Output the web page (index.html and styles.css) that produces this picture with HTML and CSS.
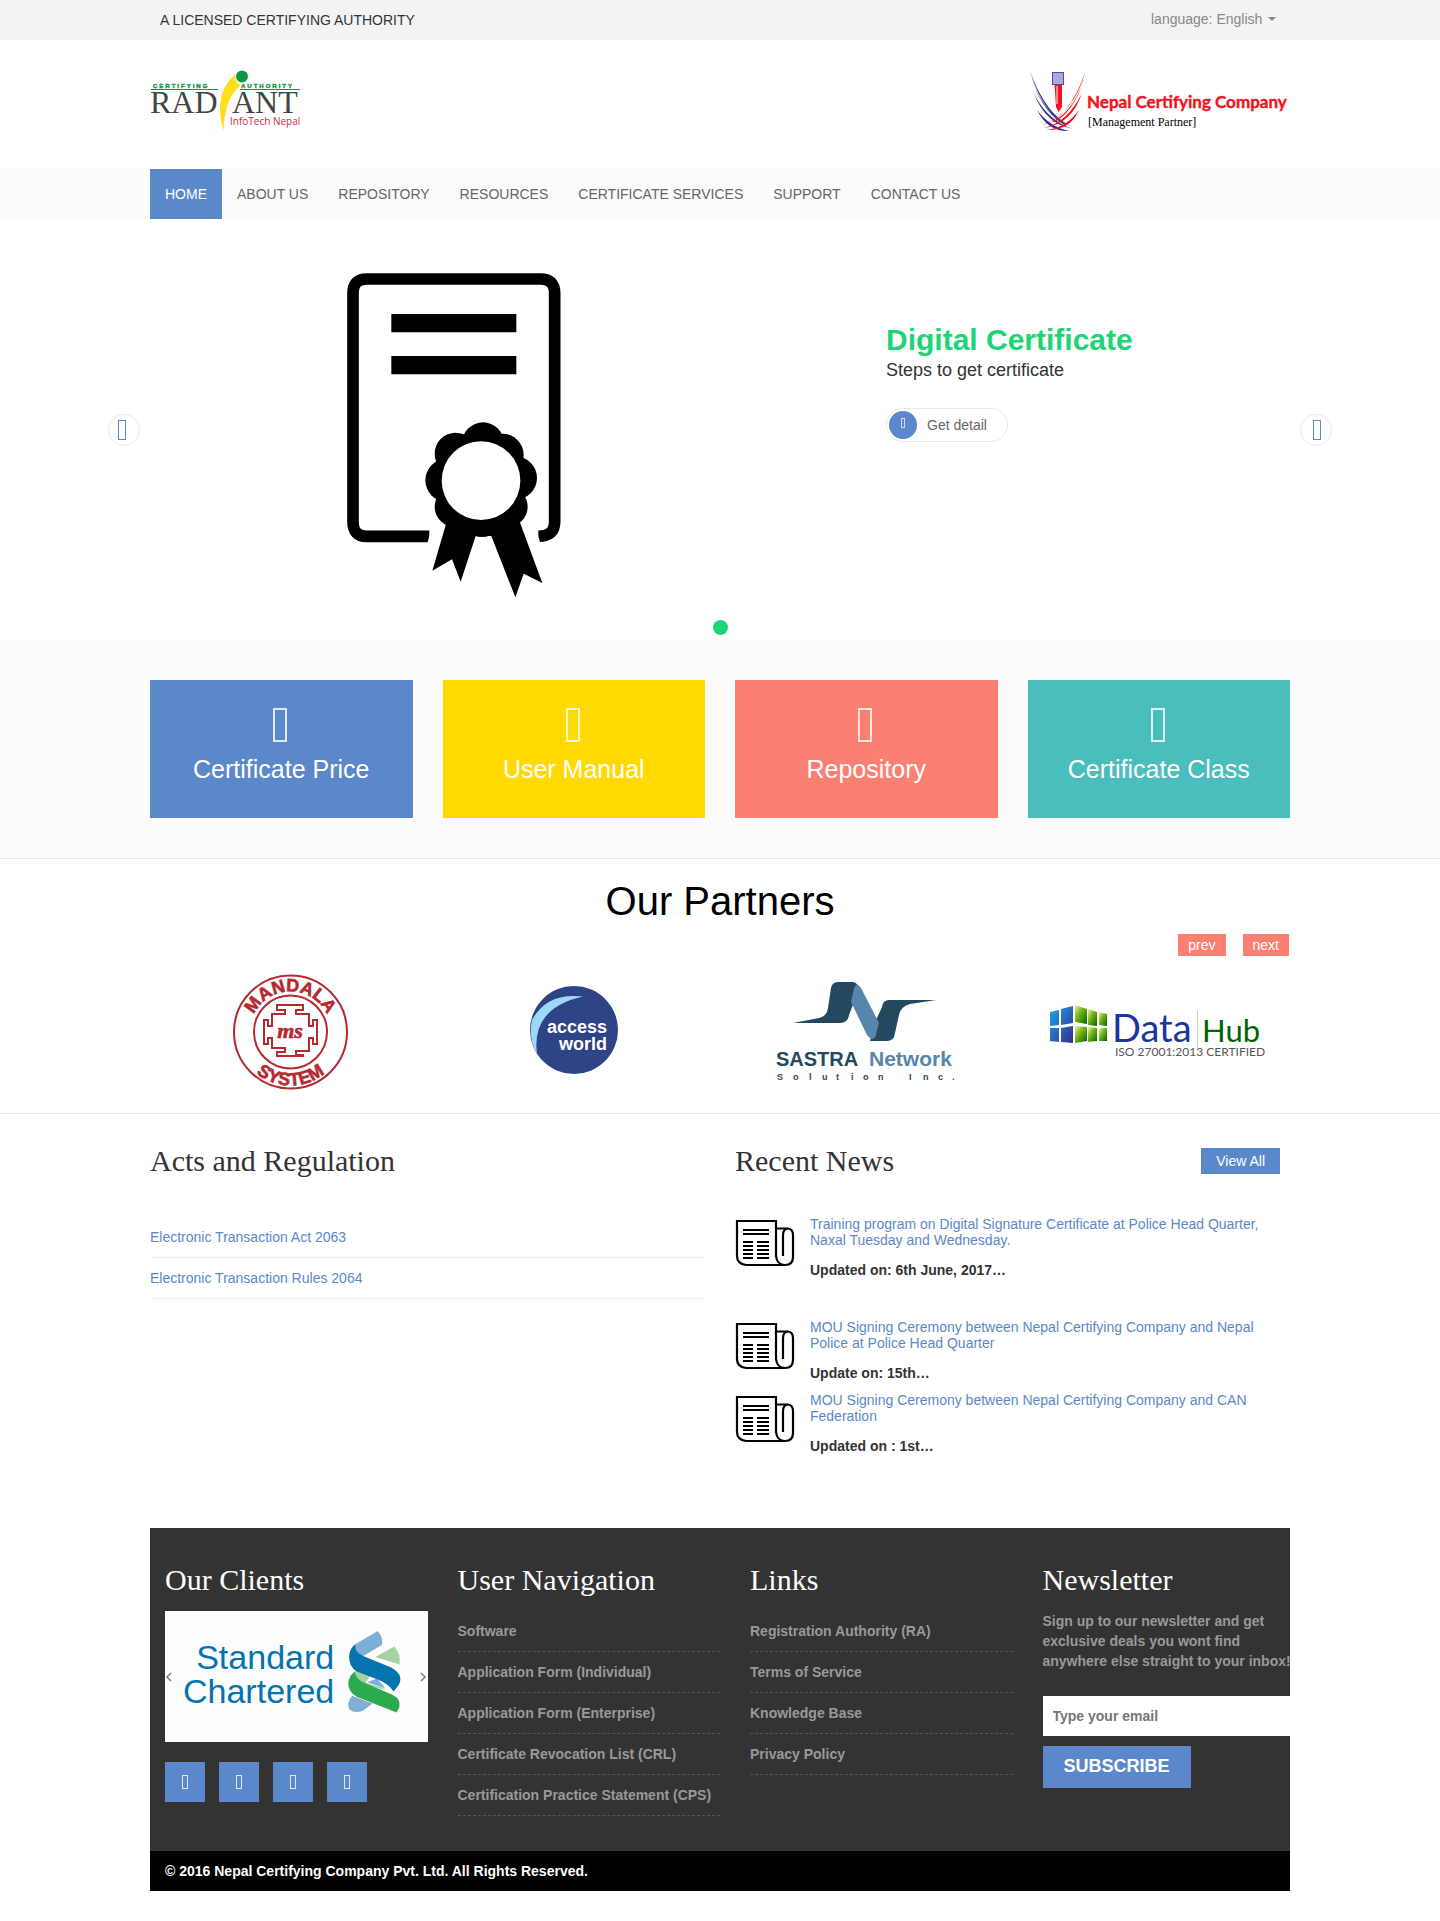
FILE: index.html
```html
<!DOCTYPE html>
<html lang="en">
<head>
<meta charset="utf-8">
<meta name="viewport" content="width=device-width, initial-scale=1">
<title>Radiant InfoTech Nepal</title>
<link rel="stylesheet" href="styles.css">
</head>
<body>
<div class="topbar">
  <div class="container topbar-row">
    <span>A LICENSED CERTIFYING AUTHORITY</span>
    <label class="language">
      <select aria-label="Language"><option>language: English</option></select>
      <span class="caret"></span>
    </label>
  </div>
</div>

<header class="container brand">
  <a href="#" aria-label="Radiant InfoTech Nepal">
    <svg width="151" height="64" viewBox="0 0 151 64">
      <g class="radiant-tag"><text x="3" y="18">CERTIFYING</text><text x="91" y="18">AUTHORITY</text></g>
      <path d="M1 19.500H68M90 19.500H150" stroke="#0f9747"/>
      <g class="radiant-name"><text x="0" y="43">RAD</text><text x="82" y="43">ANT</text></g>
      <path d="M85.500 4Q71.500 16 70 34Q69.500 48 73.500 61Q74 30 90.500 15Q84 12 85.500 4Z" fill="#ffdf1a"/>
      <circle cx="92" cy="6.500" r="6" fill="#0f9747"/>
      <text class="radiant-sub" x="80" y="55">InfoTech Nepal</text>
    </svg>
  </a>
  <a href="#" aria-label="Nepal Certifying Company">
    <svg width="260" height="64" viewBox="0 0 260 64">
      <g fill="#2a2f96">
        <path d="M0 1Q14 48 43 57Q16 46 0 1Z"/>
        <path d="M0 1Q10 40 36 54L33 54Q10 40 0 1Z"/>
        <path d="M4 24Q16 54 43 59Q18 51 4 24Z"/>
        <path d="M7 40Q18 62 39 61Q20 57 7 40Z"/>
      </g>
      <g fill="#f0141e">
        <path d="M55.500 1Q44 44 12 55Q40 48 55.500 1Z"/>
        <path d="M55.500 1Q48 38 22 52L25 52Q48 38 55.500 1Z"/>
        <path d="M52 23Q42 54 14 58Q38 52 52 23Z"/>
        <path d="M49 40Q40 61 16 60Q36 58 49 40Z"/>
        <path d="M24.500 14H32V37L28.500 42L26 37Z"/>
      </g>
      <path d="M27 16V34" stroke="#fff"/>
      <rect x="22.500" y="2.500" width="11" height="12" fill="#a9a9dc" stroke="#4a4ab0"/>
      <text class="ncc-name" x="57" y="38">Nepal Certifying Company</text>
      <text class="ncc-sub" x="58" y="56">[Management Partner]</text>
    </svg>
  </a>
</header>

<nav class="mainnav">
  <div class="container mainnav-row">
    <a class="active" href="#">HOME</a>
    <a href="#">ABOUT US</a>
    <a href="#">REPOSITORY</a>
    <a href="#">RESOURCES</a>
    <a href="#">CERTIFICATE SERVICES</a>
    <a href="#">SUPPORT</a>
    <a href="#">CONTACT US</a>
  </div>
</nav>

<section class="hero">
  <div class="container slide">
    <div class="slide-art">
      <svg width="216" height="326" viewBox="75 66 648 978">
        <path d="M328 859H140Q99 859 99 815V130Q99 87 140 87H662Q704 87 704 130V815Q704 859 655 859" fill="none" stroke="#000" stroke-width="35"/>
        <path d="M334 838L322 880H345V838ZM648 838L661 880H640V838Z" fill="#fff"/>
        <path d="M214 192H589V247H214ZM214 318H589V373H214Z"/>
        <path d="M380 815L337 962L396 928L422 995L467 858H514L586 1042L611 971L667 999L598 812Z"/>
        <circle cx="489" cy="580" r="63"/><circle cx="407" cy="611" r="63"/><circle cx="547" cy="615" r="64"/>
        <circle cx="381" cy="691" r="65"/><circle cx="586" cy="684" r="65"/><circle cx="405" cy="770" r="61"/>
        <circle cx="562" cy="770" r="61"/><circle cx="486" cy="800" r="61"/>
        <circle cx="483" cy="692" r="118" fill="#fff"/>
      </svg>
    </div>
    <div class="slide-copy">
      <h1>Digital Certificate</h1>
      <p>Steps to get certificate</p>
      <a class="detail" href="#"><span class="detail-dot"><i class="glyph glyph-xs"></i></span>Get detail</a>
    </div>
    <button class="arrow arrow-prev" aria-label="Previous slide"><i class="glyph glyph-md"></i></button>
    <button class="arrow arrow-next" aria-label="Next slide"><i class="glyph glyph-md"></i></button>
  </div>
  <button class="pager" aria-label="Slide 1"></button>
</section>

<section class="features">
  <div class="container tiles">
    <a class="tile blue" href="#"><i class="glyph glyph-lg"></i>Certificate Price</a>
    <a class="tile yellow" href="#"><i class="glyph glyph-lg"></i>User Manual</a>
    <a class="tile coral" href="#"><i class="glyph glyph-lg"></i>Repository</a>
    <a class="tile teal" href="#"><i class="glyph glyph-lg"></i>Certificate Class</a>
  </div>
</section>

<section class="partners">
  <div class="container">
    <h2>Our Partners</h2>
    <div class="partner-controls"><button>prev</button><button>next</button></div>
    <div class="partner-logos">
      <svg viewBox="0 0 285 140">
        <g fill="none" stroke="#b5292f">
          <circle cx="140.500" cy="72" r="56.500" stroke-width="2"/>
          <circle cx="140.500" cy="72" r="36.500" stroke-width="2"/>
          <path stroke-width="2" d="M127 45H153V50H146V54H159V66H163V60H167V84H163V78H159V91H146V95H153V96H127V92H135V88H122V78H118V84H114V60H118V66H122V54H135V50H127Z"/>
          <path id="arc-top" d="M100 72A40.500 40.500 0 0 1 181 72" stroke="none"/>
          <path id="arc-bottom" d="M87 72A53.500 53.500 0 0 0 194 72" stroke="none"/>
        </g>
        <g class="mandala-text">
          <text><textPath href="#arc-top" startOffset="50%">MANDALA</textPath></text>
          <text><textPath href="#arc-bottom" startOffset="50%">SYSTEM</textPath></text>
          <text class="mandala-mono" x="140" y="78">ms</text>
        </g>
      </svg>
      <svg viewBox="0 0 285 140">
        <circle cx="139" cy="70" r="44" fill="#2e4487"/>
        <path d="M148 36.500Q112 32 97 60Q93 78 102 94Q96 48 148 36.500Z" fill="#9ad9f7"/>
        <g class="access-text"><text x="172" y="73">access</text><text x="172" y="90">world</text></g>
      </svg>
      <svg viewBox="0 0 285 140">
        <path d="M73 63L99 58Q107 56 108 48L111 28Q112 22 118 22H133Q138 23 139 29L129 55Q128 63 120 63Z" fill="#24485e"/>
        <path d="M216 40L190 44Q180 47 179 55L175 73Q174 81 167 81H150L156 60L162 47Q163 40 169 40Z" fill="#24485e"/>
        <path d="M131 42L134 28Q137 21 141 28L159 63L156 75Q153 83 147 75Z" fill="#5686ab"/>
        <g class="sastra-text"><text x="56" y="106">SASTRA</text><text class="light" x="149" y="106">Network</text></g>
        <text class="sastra-sub" x="57 73 89 102 116 131 143 158 175 189 203 218 232" y="120">Solution Inc.</text>
      </svg>
      <svg viewBox="0 0 285 140">
        <defs>
          <linearGradient id="g-blue" x1="0" y1="0" x2="1" y2="1"><stop offset="0" stop-color="#18a8e8"/><stop offset="1" stop-color="#3a2a90"/></linearGradient>
          <linearGradient id="g-green" x1="0" y1="0" x2="1" y2="1"><stop offset="0" stop-color="#e8f5b0"/><stop offset=".4" stop-color="#79b818"/><stop offset="1" stop-color="#006400"/></linearGradient>
        </defs>
        <g fill="url(#g-blue)"><path d="M45 52L54 50V65L45 66ZM56 49L68 46V63L56 65ZM45 68L54 68V82L45 81ZM56 68L68 66V83L56 82Z"/></g>
        <g fill="url(#g-green)"><path d="M70 45L82 49V64L70 62Z"/><path d="M83 49L92 52V66L83 65Z"/><path d="M94 52L102 54V66L94 65Z"/><path d="M70 66L82 67V81L70 83Z"/><path d="M83 67L92 68V81L83 82Z"/><path d="M94 68L102 68V81L94 81Z"/></g>
        <path d="M192.500 50V88" stroke="#ccc"/>
        <text class="hub-data" x="107" y="82">Data</text>
        <text class="hub-hub" x="197" y="82">Hub</text>
        <text class="hub-iso" x="110" y="96">ISO 27001:2013 CERTIFIED</text>
      </svg>
    </div>
  </div>
</section>

<main class="container updates">
  <section>
    <h2>Acts and Regulation</h2>
    <ul class="acts">
      <li><a href="#">Electronic Transaction Act 2063</a></li>
      <li><a href="#">Electronic Transaction Rules 2064</a></li>
    </ul>
  </section>
  <section>
    <div class="news-head"><h2>Recent News</h2><a class="view-all" href="#">View All</a></div>
    <svg width="0" height="0" class="sprite">
      <symbol id="paper" viewBox="0 0 60 48">
        <g fill="none" stroke="#000" stroke-width="2.200">
          <path d="M2 2H41V37Q42 46 50 46H11Q2 45 2 37Z"/>
          <path d="M41 9.500H53Q58 10 58 16V38Q58 46 50 46"/>
          <path d="M53 9.500Q48 10 48 16V37" />
          <path d="M8 11H34M8 15H34M8 23H18M8 27H18M8 31H18M8 35H18M8 39H18M22 23H34M22 27H34M22 31H34M22 35H34M22 39H34"/>
        </g>
      </symbol>
    </svg>
    <article class="news spaced">
      <svg width="60" height="48"><use href="#paper"/></svg>
      <div><a href="#">Training program on Digital Signature Certificate at Police Head Quarter, Naxal Tuesday and Wednesday.</a><strong>Updated on: 6th June, 2017…</strong></div>
    </article>
    <article class="news">
      <svg width="60" height="48"><use href="#paper"/></svg>
      <div><a href="#">MOU Signing Ceremony between Nepal Certifying Company and Nepal Police at Police Head Quarter</a><strong>Update on: 15th…</strong></div>
    </article>
    <article class="news">
      <svg width="60" height="48"><use href="#paper"/></svg>
      <div><a href="#">MOU Signing Ceremony between Nepal Certifying Company and CAN Federation</a><strong>Updated on : 1st…</strong></div>
    </article>
  </section>
</main>

<footer class="container footer">
  <div class="footer-cols">
    <section>
      <h2>Our Clients</h2>
      <div class="clients">
        <svg viewBox="0 0 262 131">
          <g class="chartered"><text x="169" y="58">Standard</text><text x="169" y="92">Chartered</text></g>
          <g transform="scale(.3827 .3333) translate(-65 -303)">
            <path d="M620 363Q636 385 630 405L578 441Q555 425 562 402Z" fill="#7fafd6"/>
            <path d="M663 409Q680 430 677 463L614 441Z" fill="#a5d2a2"/>
            <path d="M560 482L600 497L588 518L630 532L640 540L575 520Q558 500 560 482Z" fill="#a5d2a2"/>
            <path d="M618 505L592 516L640 535Z" fill="#7fafd6"/>
            <path d="M562 402Q558 425 580 437L655 472Q690 495 674 525L661 544Q650 522 620 508L565 484Q545 470 545 440Q546 415 562 402Z" fill="#0473ae"/>
            <path d="M560 485Q562 508 585 518L655 552Q682 565 676 592L669 607L565 560Q543 545 543 520Q545 495 560 485Z" fill="#2bab4d"/>
            <path d="M553 557L606 580L583 600Q560 612 546 598Q537 580 553 557Z" fill="#7fafd6"/>
          </g>
        </svg>
        <button class="client-prev" aria-label="Previous client"><svg width="6" height="10" viewBox="0 0 6 10"><path d="M5 1L1 5L5 9"/></svg></button>
        <button class="client-next" aria-label="Next client"><svg width="6" height="10" viewBox="0 0 6 10"><path d="M1 1L5 5L1 9"/></svg></button>
      </div>
      <div class="social">
        <a href="#" aria-label="Facebook"><i class="glyph glyph-sm"></i></a>
        <a href="#" aria-label="Twitter"><i class="glyph glyph-sm"></i></a>
        <a href="#" aria-label="Google Plus"><i class="glyph glyph-sm"></i></a>
        <a href="#" aria-label="YouTube"><i class="glyph glyph-sm"></i></a>
      </div>
    </section>
    <section>
      <h2>User Navigation</h2>
      <ul class="links">
        <li><a href="#">Software</a></li>
        <li><a href="#">Application Form (Individual)</a></li>
        <li><a href="#">Application Form (Enterprise)</a></li>
        <li><a href="#">Certificate Revocation List (CRL)</a></li>
        <li><a href="#">Certification Practice Statement (CPS)</a></li>
      </ul>
    </section>
    <section>
      <h2>Links</h2>
      <ul class="links">
        <li><a href="#">Registration Authority (RA)</a></li>
        <li><a href="#">Terms of Service</a></li>
        <li><a href="#">Knowledge Base</a></li>
        <li><a href="#">Privacy Policy</a></li>
      </ul>
    </section>
    <section>
      <h2>Newsletter</h2>
      <form class="newsletter">
        <p>Sign up to our newsletter and get exclusive deals you wont find anywhere else straight to your inbox!</p>
        <input type="email" placeholder="Type your email" aria-label="Email">
        <button type="button">SUBSCRIBE</button>
      </form>
    </section>
  </div>
  <p class="copyright">© 2016 Nepal Certifying Company Pvt. Ltd. All Rights Reserved.</p>
</footer>
</body>
</html>
```

FILE: styles.css
```css
* { box-sizing: border-box; }
body {
  margin: 0;
  background: #fff;
  color: #333;
  font: 14px/20px "Liberation Sans", Arial, sans-serif;
}
h1, h2, p, ul { margin: 0; padding: 0; font-weight: 400; }
ul { list-style: none; }
a { color: #5b88ca; text-decoration: none; }
button, input, select { font: inherit; border: 0; border-radius: 0; margin: 0; }
button { cursor: pointer; }
svg { display: block; }
.container { max-width: 1140px; margin: 0 auto; }

/* Outlined icon boxes */
.glyph { display: block; border: 1px solid currentColor; }
.glyph-xs { width: 4px; height: 10px; opacity: .7; }
.glyph-sm { width: 6px; height: 14px; opacity: .8; }
.glyph-md { width: 8px; height: 20px; }
.glyph-lg { width: 14px; height: 34px; margin-right: 2px; border-width: 2px; opacity: .8; }

/* Top bar */
.topbar { background: #f3f3f3; }
.topbar-row { display: flex; justify-content: space-between; padding: 10px 14px 10px 10px; }
.language { display: flex; align-items: center; gap: 5px; height: 18px; color: #888; }
.language select { appearance: none; background: none; color: inherit; padding: 0; }
.caret { border: 4px solid transparent; border-top-color: #888; border-bottom: 0; }

/* Logos */
.brand { display: flex; justify-content: space-between; padding: 30px 0 35px; }
.radiant-tag { font: 700 6px "Liberation Sans", sans-serif; letter-spacing: 2px; fill: #0f9747; stroke: #0f9747; stroke-width: .4px; }
.radiant-name { font: 32px "Liberation Serif", serif; fill: #444; }
.radiant-sub { font: 10px "Open Sans", sans-serif; fill: #d02a40; }
.ncc-name { font: 700 17px Lato, sans-serif; fill: #f0141e; stroke: #f0141e; stroke-width: .4px; }
.ncc-sub { font: 12px "Liberation Serif", serif; fill: #000; }

/* Main navigation */
.mainnav { background: #fbfbfb; }
.mainnav-row { display: flex; }
.mainnav a { padding: 15px; color: #666; }
.mainnav a.active { background: #5b88ca; color: #fff; }

/* Slider */
.hero { padding: 53px 0 5px; }
.slide { position: relative; display: grid; grid-template-columns: 3fr 2fr; gap: 130px; }
.slide-art { display: flex; justify-content: center; }
.slide-copy { padding-top: 50px; }
.slide-copy h1 { color: #1ed576; font-size: 30px; font-weight: 700; line-height: 36px; }
.slide-copy p { font-size: 18px; line-height: 24px; }
.detail { display: inline-flex; align-items: center; gap: 10px; margin-top: 26px; padding: 2px 20px 2px 2px; border: 1px solid #eaeaea; border-radius: 18px; color: #666; }
.detail-dot { display: flex; justify-content: center; width: 28px; height: 28px; padding-top: 7px; border-radius: 50%; background: #5b88ca; color: #fff; }
.arrow { position: absolute; top: 142px; display: flex; align-items: center; width: 32px; height: 32px; padding: 0 9px; border: 1px solid #eaeaea; border-radius: 50%; background: #fff; color: #5b88ca; }
.arrow-prev { left: -42px; }
.arrow-next { right: -42px; padding-left: 12px; }
.pager { display: block; width: 15px; height: 15px; margin: 22px auto 0; padding: 0; border-radius: 50%; background: #1ed576; }

/* Feature tiles */
.features { padding: 40px 0; background: #fbfbfb; border-bottom: 1px solid #e5e5e5; }
.tiles { display: grid; grid-template-columns: repeat(4, 1fr); gap: 30px; }
.tile { display: flex; flex-direction: column; align-items: center; gap: 13px; padding: 28px 0 35px; color: #fff; font-size: 25px; line-height: 28px; }
.blue { background: #5b88ca; }
.yellow { background: #ffd900; }
.coral { background: #fb8072; }
.teal { background: #4abdbd; }

/* Partners */
.partners { padding: 20px 0 13px; border-bottom: 1px solid #e5e5e5; }
.partners h2 { color: #000; font-size: 40px; line-height: 44px; text-align: center; }
.partner-controls { display: flex; justify-content: flex-end; gap: 17px; margin: 11px 1px 4px; }
.partner-controls button { padding: 1px 10px; background: #fb8072; color: #fff; }
.partner-logos { display: grid; grid-template-columns: repeat(4, 1fr); }
.mandala-text { font: 700 18px "Liberation Sans", sans-serif; fill: #b5292f; stroke: #b5292f; stroke-width: .6px; text-anchor: middle; }
.mandala-mono { font: italic 700 22px "Liberation Serif", serif; }
.access-text { font: 700 18px "Liberation Sans", sans-serif; fill: #fff; text-anchor: end; }
.sastra-text { font: 700 20px "Liberation Sans", sans-serif; fill: #24485e; }
.sastra-text .light { font-size: 21px; fill: #5686ab; }
.sastra-sub { font: 700 9px "Liberation Sans", sans-serif; fill: #24485e; }
.hub-data { font: 38px Lato, sans-serif; fill: #1a35a0; }
.hub-hub { font: 31px Lato, sans-serif; fill: #006400; }
.hub-iso { font: 12px Lato, sans-serif; fill: #555; }

/* Acts and news */
.updates { display: grid; grid-template-columns: 1fr 1fr; gap: 30px; padding: 30px 0 63px; }
.updates h2, .footer h2 { font-family: "Liberation Serif", serif; font-size: 30px; line-height: 33px; }
.acts { margin-top: 40px; }
.acts li { padding: 10px 0; border-bottom: 1px solid #eee; }
.news-head { display: flex; justify-content: space-between; align-items: center; margin: 0 10px 39px 0; }
.view-all { padding: 3px 15px; background: #5b88ca; color: #fff; }
.sprite { position: absolute; }
.news { display: flex; gap: 15px; padding-bottom: 11px; line-height: 16px; }
.news.spaced { padding-bottom: 41px; }
.news > svg { flex: none; margin-top: 3px; }
.news strong { display: block; margin-top: 14px; }

/* Footer */
.footer { overflow: hidden; margin-bottom: 30px; background: #333; font-weight: 700; }
.footer-cols { display: grid; grid-template-columns: repeat(4, minmax(0, 1fr)); gap: 30px; margin: 0 -15px 0 15px; padding: 35px 0; }
.footer h2 { margin-bottom: 15px; color: #fff; }
.clients { position: relative; background: #fdfdfd; }
.clients > svg { width: 100%; }
.chartered { font: 34px "Liberation Sans", sans-serif; fill: #0473ae; text-anchor: end; }
.clients button { position: absolute; top: 0; bottom: 0; padding: 0; background: none; }
.clients button path { fill: none; stroke: #777; stroke-width: 1.5; }
.client-prev { left: 1px; }
.client-next { right: 2px; }
.social { display: flex; gap: 14px; margin-top: 20px; }
.social a { display: flex; align-items: center; justify-content: center; width: 40px; height: 40px; background: #5b88ca; color: #fff; }
.links { font-weight: 700; }
.links li { padding: 10px 0; border-bottom: 1px dashed #555; }
.links a, .newsletter p { color: #999; }
.newsletter p { font-weight: 700; }
.newsletter input { display: block; width: 100%; height: 40px; margin: 25px 0 10px; padding: 0 10px; background: #fff; font-weight: 700; }
.newsletter input::placeholder { color: #777; }
.newsletter button { padding: 10px 21px 12px; background: #5b88ca; color: #fff; font-size: 18px; font-weight: 700; }
.copyright { padding: 10px 15px; background: #000; color: #fff; font-weight: 700; }
```
